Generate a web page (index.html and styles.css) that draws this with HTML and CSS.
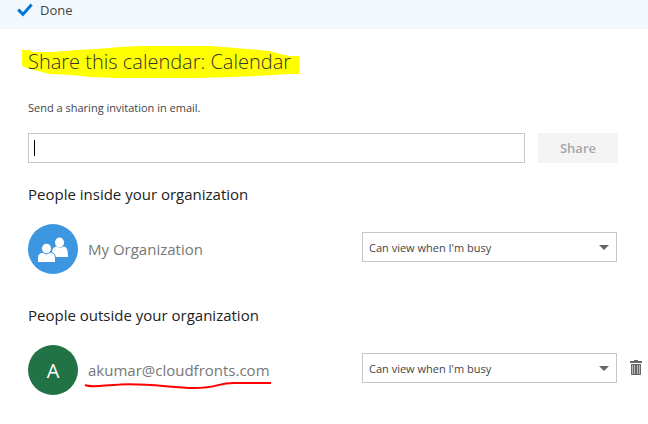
FILE: index.html
```html
<!DOCTYPE html>
<html lang="en">
<head>
    <meta charset="UTF-8">
    <meta name="viewport" content="width=device-width, initial-scale=1.0">
    <title>Share this calendar</title>
    <link rel="stylesheet" href="styles.css">
</head>
<body>

<header class="toolbar">
    <button type="button" class="done">
        <svg class="done-icon" width="16" height="14" viewBox="0 0 16 14" aria-hidden="true">
            <path d="M1.2 6.6 L6 11.4 L14.6 1.4" fill="none" stroke="#0078d7" stroke-width="3"/>
        </svg>
        Done
    </button>
</header>

<main class="content">
    <h1 class="title">
        <svg class="highlight" width="278" height="32" viewBox="22 46 278 32" aria-hidden="true">
            <path fill="#ffff00" d="M22 50H30L33 52H52L77 50L96 49L120 47L141 46H212L235 48L247 49L270 51L280 54L289 56H299V74H289L256 76L232 77L196 78H116L90 77L72 75L50 74L38 71L30 69L22 66Z"/>
        </svg>
        <span class="title-text">Share this calendar: Calendar</span>
    </h1>

    <form class="invite">
        <label class="invite-label" for="email">Send a sharing invitation in email.</label>
        <div class="invite-row">
            <div class="invite-field">
                <input type="text" id="email" class="invite-input">
                <span class="caret"></span>
            </div>
            <button type="submit" class="share" disabled>Share</button>
        </div>
    </form>

    <section class="group">
        <h2 class="group-title">People inside your organization</h2>
        <div class="person">
            <div class="avatar avatar-org">
                <svg width="50" height="50" viewBox="0 0 50 50" aria-hidden="true">
                    <g fill="#fff" stroke="#3c97e0">
                        <path d="M24 33V29C24 25 26 22.6 29 22.6Q32 25 35 22.6C38.500 22.600 40 25 40 33Z" stroke="none"/>
                        <ellipse cx="31.500" cy="18.500" rx="4.500" ry="5" stroke="none"/>
                        <path d="M9.500 38.500V34C9.500 30.500 12 28.200 15 28.200Q18.500 31 22 28.200C25.500 28.200 27.500 30.500 27.500 34V38.500Z"/>
                        <ellipse cx="18.500" cy="24.500" rx="5" ry="5.300"/>
                    </g>
                </svg>
            </div>
            <label class="person-name" for="org-access">My Organization</label>
            <div class="access">
                <select id="org-access" class="access-select">
                    <option>Can view when I'm busy</option>
                </select>
                <svg class="arrow" width="10" height="5" viewBox="0 0 10 5" aria-hidden="true"><path d="M0 0H10L5 5Z" fill="#666"/></svg>
            </div>
            <div class="actions"></div>
        </div>
    </section>

    <section class="group">
        <h2 class="group-title">People outside your organization</h2>
        <div class="person">
            <div class="avatar avatar-green">A</div>
            <label class="person-name" for="guest-access">
                akumar@cloudfronts.com
                <svg class="underline" width="188" height="8" viewBox="0 0 188 8" aria-hidden="true">
                    <path d="M1 3C8 6 20 3 36 2.500C64 1 88 6 110 6C136 6 132 1 150 1H187" fill="none" stroke="#f00" stroke-width="2"/>
                </svg>
            </label>
            <div class="access">
                <select id="guest-access" class="access-select">
                    <option>Can view when I'm busy</option>
                </select>
                <svg class="arrow" width="10" height="5" viewBox="0 0 10 5" aria-hidden="true"><path d="M0 0H10L5 5Z" fill="#666"/></svg>
            </div>
            <div class="actions">
                <button type="button" class="remove" aria-label="Remove">
                    <svg width="12" height="15" viewBox="0 0 12 15" aria-hidden="true">
                        <path d="M4 0H8V1H12V3H0V1H4Z" fill="#666"/>
                        <path d="M1 4H11V14Q11 15 10 15H2Q1 15 1 14Z" fill="#666"/>
                        <path d="M2.500 5V14M4.500 5V14M7.500 5V14M9.500 5V14" stroke="#bbb"/>
                    </svg>
                </button>
            </div>
        </div>
    </section>
</main>

</body>
</html>
```
FILE: styles.css
```css
* {
    box-sizing: border-box;
}
body {
    margin: 0;
    background: #fff;
    color: #444;
    font-family: "Open Sans", "Noto Sans", sans-serif;
    font-size: 11px;
}
button, input, select {
    font-family: inherit;
}
.toolbar {
    display: flex;
    align-items: flex-start;
    height: 29px;
    padding: 0 17px;
    background: #f3f8fd;
}
.done {
    display: flex;
    align-items: center;
    gap: 7px;
    padding: 0;
    border: none;
    background: none;
    color: #444;
    font-size: 13px;
    line-height: 20px;
    cursor: pointer;
}
.content {
    padding: 17px 6px 0 28px;
}
.title {
    position: relative;
    margin: 0;
    color: #333;
    font-size: 20px;
    font-weight: 300;
    line-height: 32px;
}
.highlight {
    position: absolute;
    top: 0;
    left: -6px;
}
.title-text {
    position: relative;
}
.invite-label {
    display: block;
    margin-top: 20px;
    line-height: 20px;
}
.invite-row {
    display: flex;
    gap: 13px;
    margin-top: 15px;
    padding-right: 24px;
}
.invite-field {
    position: relative;
    flex: 1;
}
.invite-input {
    display: block;
    width: 100%;
    height: 30px;
    padding: 0 6px;
    border: 1px solid #c6c6c6;
    outline: none;
    font-size: 11px;
}
.caret {
    position: absolute;
    top: 7px;
    left: 6px;
    width: 1px;
    height: 16px;
    background: #000;
}
.share {
    width: 80px;
    height: 30px;
    padding: 0;
    border: none;
    background: #f4f4f4;
    color: #a6a6a6;
    font-size: 13px;
    font-weight: 600;
}
.group {
    margin-bottom: 31px;
}
.invite + .group {
    margin-top: 21px;
}
.group-title {
    margin: 0 0 20px;
    color: #222;
    font-size: 15px;
    font-weight: 400;
    line-height: 20px;
}
.person {
    display: flex;
    align-items: center;
}
.avatar {
    display: flex;
    align-items: center;
    justify-content: center;
    width: 50px;
    height: 50px;
    border-radius: 50%;
    color: #fff;
    font-size: 20px;
}
.avatar-org {
    background: #3c97e0;
}
.avatar-green {
    background: #217346;
}
.person-name {
    position: relative;
    margin-left: 10px;
    color: #777;
    font-size: 15px;
    line-height: 20px;
}
.underline {
    position: absolute;
    top: 22px;
    left: -4px;
}
.access {
    position: relative;
    width: 255px;
    margin: 0 0 4px auto;
}
.access-select {
    display: block;
    width: 100%;
    height: 30px;
    padding: 0 6px;
    border: 1px solid #c6c6c6;
    border-radius: 0;
    background: #fff;
    color: #444;
    font-size: 11px;
    appearance: none;
}
.arrow {
    position: absolute;
    top: 13px;
    right: 8px;
    pointer-events: none;
}
.actions {
    display: flex;
    justify-content: flex-end;
    width: 25px;
    margin-bottom: 5px;
}
.remove {
    display: flex;
    padding: 0;
    border: none;
    background: none;
    cursor: pointer;
}
```
